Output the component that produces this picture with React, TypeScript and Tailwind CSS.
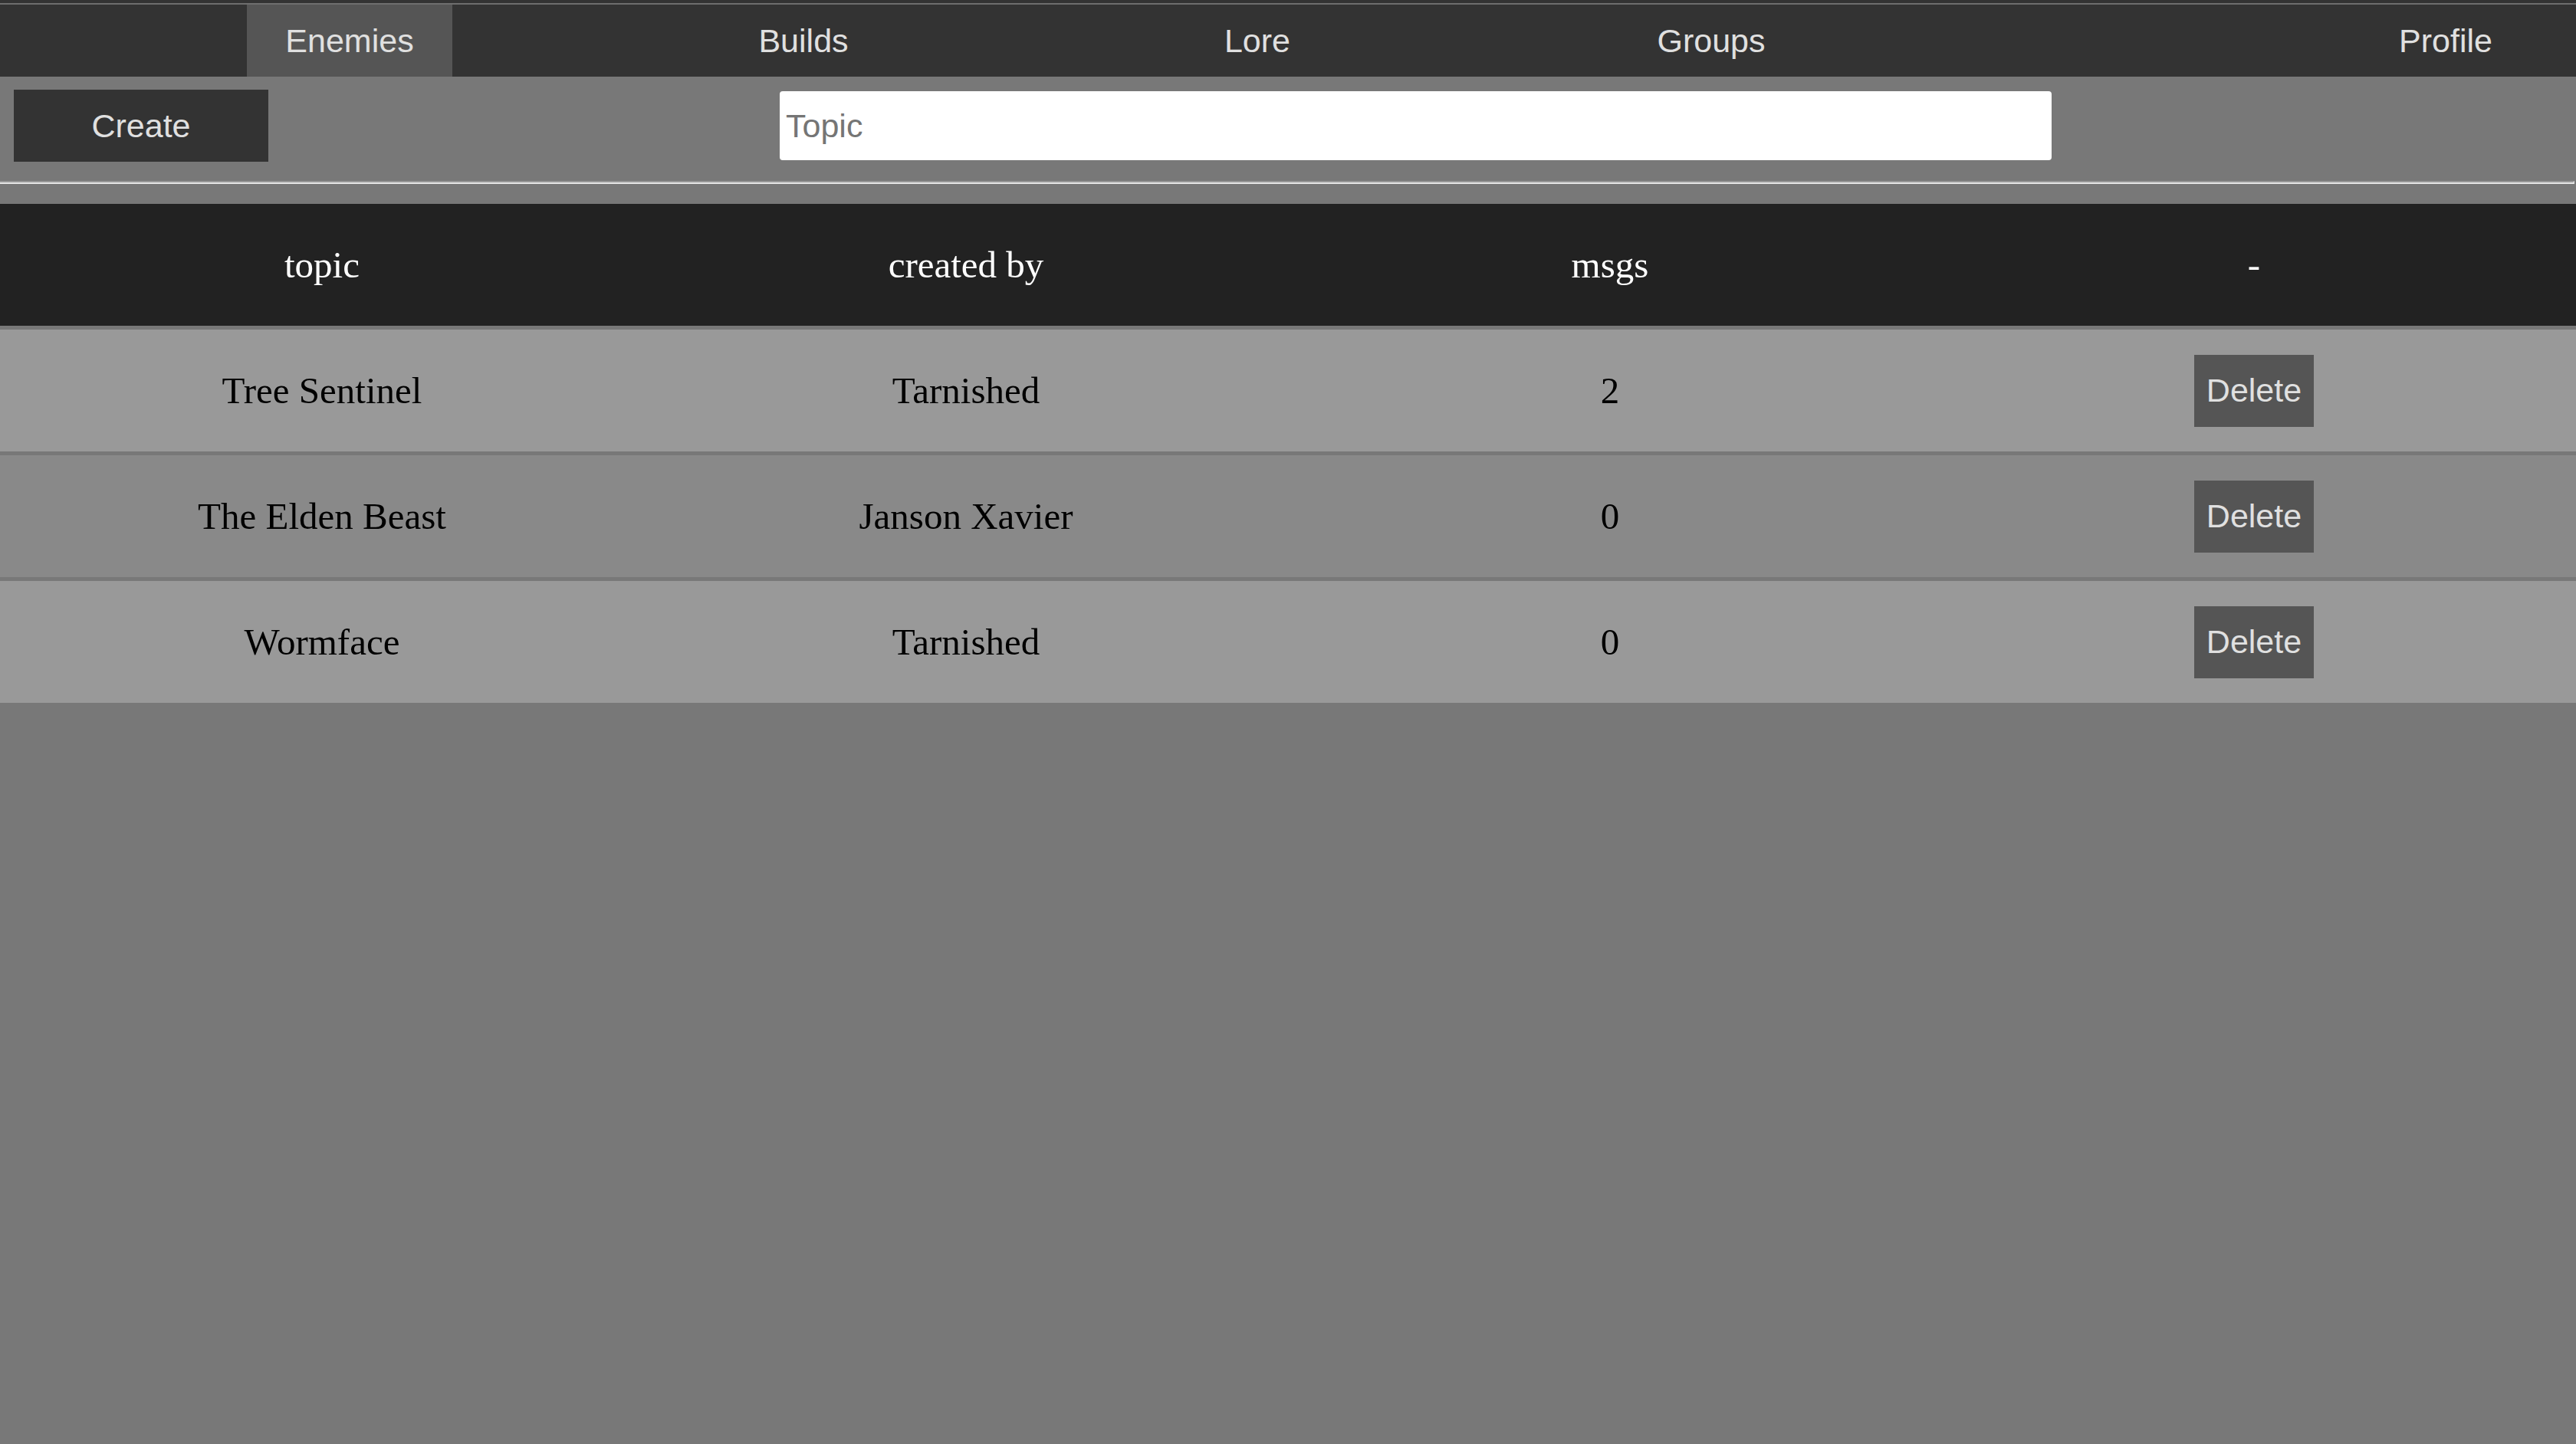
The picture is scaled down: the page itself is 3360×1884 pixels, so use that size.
import React from 'react';

const navItems = [
  { label: 'Enemies', active: true },
  { label: 'Builds', active: false },
  { label: 'Lore', active: false },
  { label: 'Groups', active: false },
];

const topics = [
  { topic: 'Tree Sentinel', author: 'Tarnished', msgs: 2 },
  { topic: 'The Elden Beast', author: 'Janson Xavier', msgs: 0 },
  { topic: 'Wormface', author: 'Tarnished', msgs: 0 },
];

export default function App() {
  return (
    <div className="min-h-screen bg-[#787878] font-['Liberation_Sans',Arial,sans-serif]">
      {/* Top nav */}
      <div className="bg-[#333333] pt-[4px]">
        <div className="h-[2px] bg-[#6e6e6e]" />
        <nav className="flex h-[94px] pl-[160px] text-[43px] text-[#e0e0e0]">
          {navItems.map((item) => (
            <div key={item.label} className="flex w-[592px] justify-center">
              <a
                href="#"
                className={
                  item.active
                    ? 'flex h-full items-center bg-[#555555] px-[50px]'
                    : 'flex h-full items-center px-[50px]'
                }
              >
                {item.label}
              </a>
            </div>
          ))}
          <a href="#" className="ml-auto mr-[59px] flex h-full items-center px-[50px]">
            Profile
          </a>
        </nav>
      </div>

      {/* Create bar */}
      <div className="flex items-center py-[17px] pl-[18px]">
        <button className="h-[94px] w-[332px] bg-[#333333] text-[43px] text-[#e0e0e0]">
          Create
        </button>
        <input
          placeholder="Topic"
          className="ml-[667px] h-[90px] w-[1659px] rounded-[4px] bg-white pl-[8px] text-[43px] text-black outline-none placeholder:text-[#757575]"
        />
      </div>
      <hr className="mt-[8px] mr-[2px] h-[4px] border-t-2 border-r-2 border-b-2 border-t-[#9a9a9a] border-r-[#dddddd] border-b-[#e6e6e6]" />

      {/* Topic table */}
      <div className="mt-[26px] flex flex-col gap-[5px] font-['Liberation_Serif','Times_New_Roman',serif] text-[49px]">
        <div className="grid h-[159px] grid-cols-4 items-center bg-[#222222] text-center text-white">
          <div>topic</div>
          <div>created by</div>
          <div>msgs</div>
          <div>-</div>
        </div>
        {topics.map((row, i) => (
          <div
            key={row.topic}
            className={
              i % 2 === 0
                ? 'grid h-[159px] grid-cols-4 items-center bg-[#999999] text-center text-black'
                : 'grid h-[159px] grid-cols-4 items-center bg-[#898989] text-center text-black'
            }
          >
            <div>{row.topic}</div>
            <div>{row.author}</div>
            <div>{row.msgs}</div>
            <div className="flex justify-center">
              <button className="h-[94px] w-[156px] bg-[#555555] font-['Liberation_Sans',Arial,sans-serif] text-[43px] text-[#e0e0e0]">
                Delete
              </button>
            </div>
          </div>
        ))}
      </div>
    </div>
  );
}
